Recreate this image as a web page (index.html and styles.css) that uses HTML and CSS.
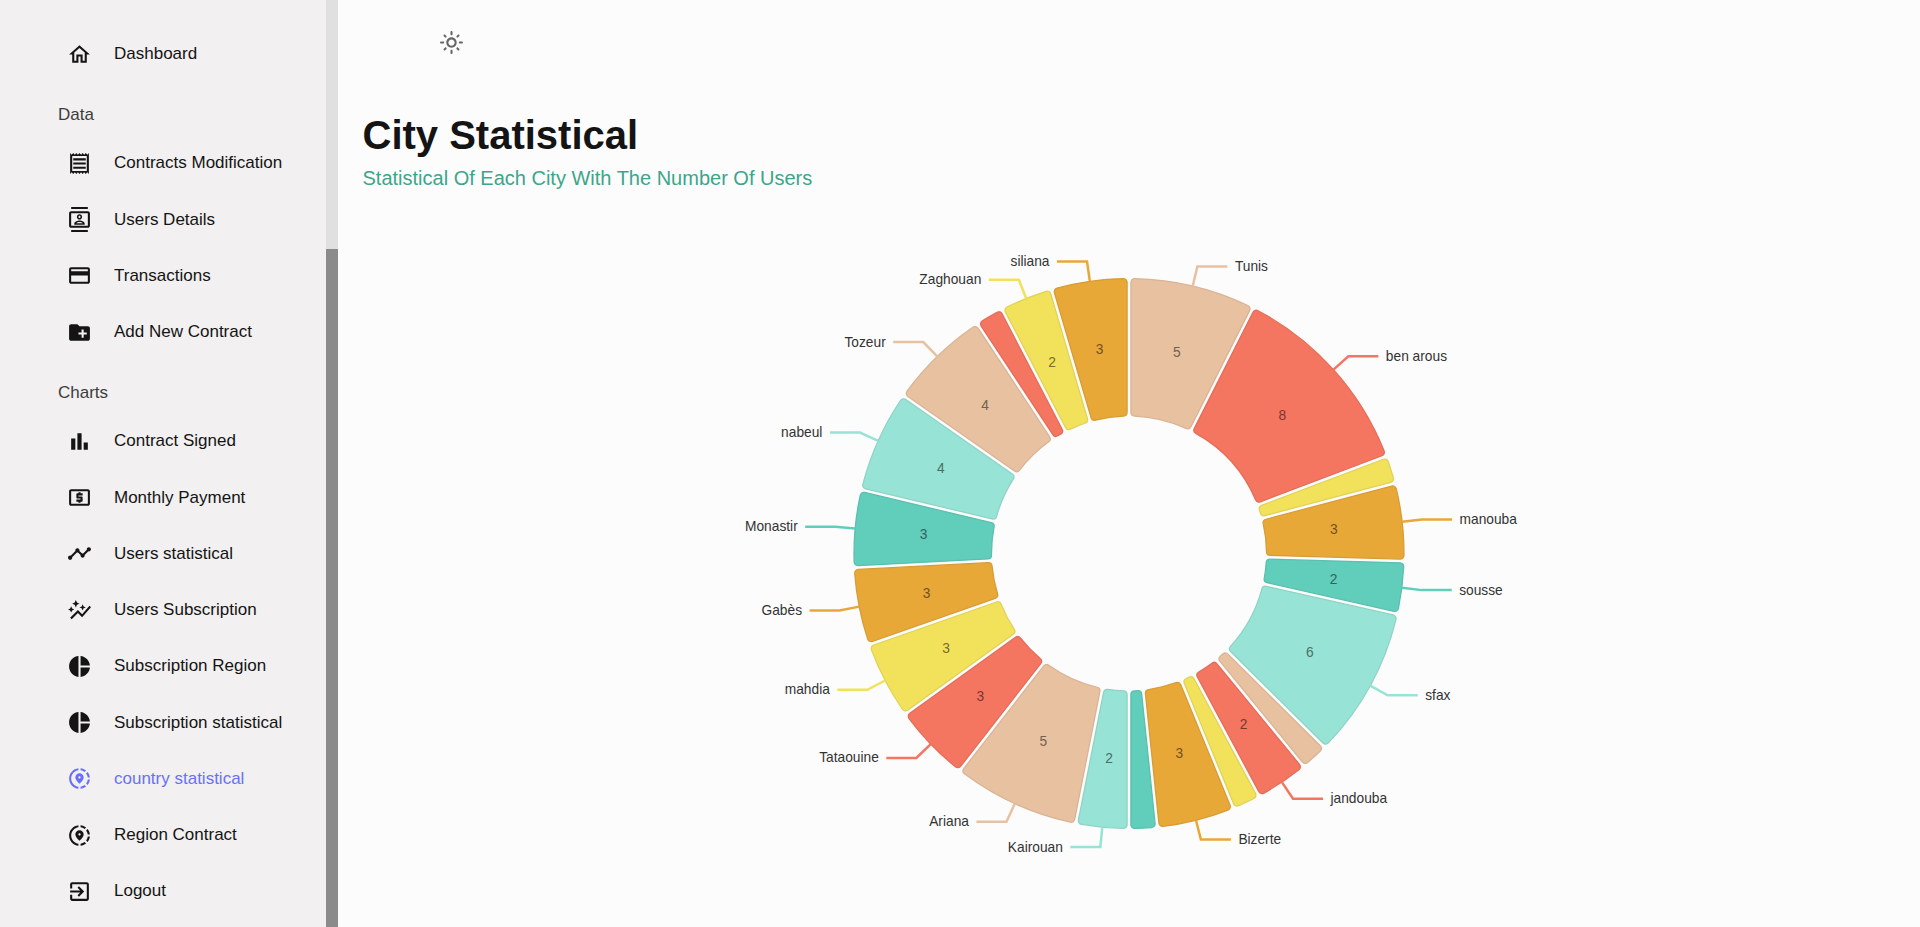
FILE: index.html
```html
<!DOCTYPE html>
<html lang="en">
<head>
  <meta charset="UTF-8" />
  <meta name="viewport" content="width=device-width, initial-scale=1" />
  <title>City Statistical</title>
  <link rel="stylesheet" href="styles.css">
</head>
<body>

<div class="app">
  <aside class="sidebar">
    <nav class="menu">
      <a class="menu-item">
        <svg class="icon" viewBox="0 0 24 24"><path d="m12 5.69 5 4.5V18h-2v-6H9v6H7v-7.81l5-4.5M12 3 2 12h3v8h6v-6h2v6h6v-8h3L12 3z"/></svg>
        <span>Dashboard</span>
      </a>

      <h6 class="menu-title">Data</h6>
      <a class="menu-item">
        <svg class="icon" viewBox="0 0 24 24"><path d="M19.5 3.5 18 2l-1.5 1.5L15 2l-1.5 1.5L12 2l-1.5 1.5L9 2 7.5 3.5 6 2 4.5 3.5 3 2v20l1.5-1.5L6 22l1.5-1.5L9 22l1.5-1.5L12 22l1.5-1.5L15 22l1.5-1.5L18 22l1.5-1.5L21 22V2l-1.5 1.5zM19 19.09H5V4.91h14v14.18zM6 15h12v2H6zm0-4h12v2H6zm0-4h12v2H6z"/></svg>
        <span>Contracts Modification</span>
      </a>
      <a class="menu-item">
        <svg class="icon" viewBox="0 0 24 24"><path d="M20 0H4v2h16V0zM4 24h16v-2H4v2zM20 4H4c-1.1 0-2 .9-2 2v12c0 1.1.9 2 2 2h16c1.1 0 2-.9 2-2V6c0-1.1-.9-2-2-2zm0 14H4V6h16v12zm-8-6c1.38 0 2.5-1.12 2.5-2.5S13.38 7 12 7 9.5 8.12 9.5 9.5 10.62 12 12 12zm0-3.5c.55 0 1 .45 1 1s-.45 1-1 1-1-.45-1-1 .45-1 1-1zM17 15.99c0-2.09-3.31-2.99-5-2.99s-5 .9-5 2.99V17h10v-1.01zM8.81 15.5c.61-.52 2.03-1 3.19-1 1.17 0 2.59.48 3.2 1H8.81z"/></svg>
        <span>Users Details</span>
      </a>
      <a class="menu-item">
        <svg class="icon" viewBox="0 0 24 24"><path d="M20 4H4c-1.11 0-1.99.89-1.99 2L2 18c0 1.11.89 2 2 2h16c1.11 0 2-.89 2-2V6c0-1.11-.89-2-2-2zm0 14H4v-6h16v6zm0-10H4V6h16v2z"/></svg>
        <span>Transactions</span>
      </a>
      <a class="menu-item">
        <svg class="icon" viewBox="0 0 24 24"><path d="M20 6h-8l-2-2H4c-1.11 0-1.99.89-1.99 2L2 18c0 1.11.89 2 2 2h16c1.11 0 2-.89 2-2V8c0-1.11-.89-2-2-2zm-1 8h-3v3h-2v-3h-3v-2h3V9h2v3h3v2z"/></svg>
        <span>Add New Contract</span>
      </a>

      <h6 class="menu-title">Charts</h6>
      <a class="menu-item">
        <svg class="icon" viewBox="0 0 24 24"><path d="M4 9h4v11H4zm12 4h4v7h-4zm-6-9h4v16h-4z"/></svg>
        <span>Contract Signed</span>
      </a>
      <a class="menu-item">
        <svg class="icon" viewBox="0 0 24 24"><path d="M11 17h2v-1h1c.55 0 1-.45 1-1v-3c0-.55-.45-1-1-1h-3v-1h4V8h-2V7h-2v1h-1c-.55 0-1 .45-1 1v3c0 .55.45 1 1 1h3v1H9v2h2v1zm9-13H4c-1.11 0-1.99.89-1.99 2L2 18c0 1.11.89 2 2 2h16c1.11 0 2-.89 2-2V6c0-1.11-.89-2-2-2zm0 14H4V6h16v12z"/></svg>
        <span>Monthly Payment</span>
      </a>
      <a class="menu-item">
        <svg class="icon" viewBox="0 0 24 24"><path d="M23 8c0 1.1-.9 2-2 2-.18 0-.35-.02-.51-.07l-3.56 3.55c.05.16.07.34.07.52 0 1.1-.9 2-2 2s-2-.9-2-2c0-.18.02-.36.07-.52l-2.55-2.55c-.16.05-.34.07-.52.07s-.36-.02-.52-.07l-4.55 4.56c.05.16.07.33.07.51 0 1.1-.9 2-2 2s-2-.9-2-2 .9-2 2-2c.18 0 .35.02.51.07l4.56-4.55C8.02 9.36 8 9.18 8 9c0-1.1.9-2 2-2s2 .9 2 2c0 .18-.02.36-.07.52l2.55 2.55c.16-.05.34-.07.52-.07s.36.02.52.07l3.55-3.56C19.02 8.35 19 8.18 19 8c0-1.1.9-2 2-2s2 .9 2 2z"/></svg>
        <span>Users statistical</span>
      </a>
      <a class="menu-item">
        <svg class="icon" viewBox="0 0 24 24"><path d="M14.06 9.94 12 9l2.06-.94L15 6l.94 2.06L18 9l-2.06.94L15 12l-.94-2.06zM4 14l.94-2.06L7 11l-2.06-.94L4 8l-.94 2.06L1 11l2.06.94L4 14zm4.5-5 1.09-2.41L12 5.5 9.59 4.41 8.5 2 7.41 4.41 5 5.5l2.41 1.09L8.5 9zm-4 11.5 6-6.01 4 4L23 8.93l-1.41-1.41-7.09 7.97-4-4L3 19l1.5 1.5z"/></svg>
        <span>Users Subscription</span>
      </a>
      <a class="menu-item">
        <svg class="icon" viewBox="0 0 24 24"><path d="M11 2v20c-5.07-.5-9-4.79-9-10s3.93-9.5 9-10zm2.03 0v8.99H22c-.47-4.74-4.24-8.52-8.97-8.99zm0 11.01V22c4.74-.47 8.5-4.25 8.97-8.99h-8.97z"/></svg>
        <span>Subscription Region</span>
      </a>
      <a class="menu-item">
        <svg class="icon" viewBox="0 0 24 24"><path d="M11 2v20c-5.07-.5-9-4.79-9-10s3.93-9.5 9-10zm2.03 0v8.99H22c-.47-4.74-4.24-8.52-8.97-8.99zm0 11.01V22c4.74-.47 8.5-4.25 8.97-8.99h-8.97z"/></svg>
        <span>Subscription statistical</span>
      </a>
      <a class="menu-item active">
        <svg class="icon" viewBox="0 0 24 24"><path d="M13.02 19.93v2.02c2.01-.2 3.84-1 5.32-2.21l-1.42-1.43c-1.11.86-2.44 1.44-3.9 1.62zM4.03 12c0-4.05 3.03-7.41 6.95-7.93V2.05C5.95 2.58 2.03 6.84 2.03 12c0 5.16 3.92 9.42 8.95 9.95v-2.02c-3.92-.52-6.95-3.88-6.95-7.93zm15.92-1h2.02c-.2-2.01-1-3.84-2.21-5.32l-1.43 1.43c.86 1.1 1.44 2.43 1.62 3.89zm-1.61-6.74c-1.48-1.21-3.32-2.01-5.32-2.21v2.02c1.46.18 2.79.76 3.9 1.62l1.42-1.43zm-.01 12.64 1.43 1.42c1.21-1.48 2.01-3.31 2.21-5.32h-2.02c-.18 1.46-.76 2.79-1.62 3.9zM16 11.1C16 8.61 14.1 7 12 7s-4 1.61-4 4.1c0 1.66 1.33 3.63 4 5.9 2.67-2.27 4-4.24 4-5.9zm-4 .9c-.59 0-1.07-.48-1.07-1.07 0-.59.48-1.07 1.07-1.07s1.07.48 1.07 1.07c0 .59-.48 1.07-1.07 1.07z"/></svg>
        <span>country statistical</span>
      </a>
      <a class="menu-item">
        <svg class="icon" viewBox="0 0 24 24"><path d="M13.02 19.93v2.02c2.01-.2 3.84-1 5.32-2.21l-1.42-1.43c-1.11.86-2.44 1.44-3.9 1.62zM4.03 12c0-4.05 3.03-7.41 6.95-7.93V2.05C5.95 2.58 2.03 6.84 2.03 12c0 5.16 3.92 9.42 8.95 9.95v-2.02c-3.92-.52-6.95-3.88-6.95-7.93zm15.92-1h2.02c-.2-2.01-1-3.84-2.21-5.32l-1.43 1.43c.86 1.1 1.44 2.43 1.62 3.89zm-1.61-6.74c-1.48-1.21-3.32-2.01-5.32-2.21v2.02c1.46.18 2.79.76 3.9 1.62l1.42-1.43zm-.01 12.64 1.43 1.42c1.21-1.48 2.01-3.31 2.21-5.32h-2.02c-.18 1.46-.76 2.79-1.62 3.9zM16 11.1C16 8.61 14.1 7 12 7s-4 1.61-4 4.1c0 1.66 1.33 3.63 4 5.9 2.67-2.27 4-4.24 4-5.9zm-4 .9c-.59 0-1.07-.48-1.07-1.07 0-.59.48-1.07 1.07-1.07s1.07.48 1.07 1.07c0 .59-.48 1.07-1.07 1.07z"/></svg>
        <span>Region Contract</span>
      </a>
      <a class="menu-item">
        <svg class="icon" viewBox="0 0 24 24"><path d="M10.09 15.59 11.5 17l5-5-5-5-1.41 1.41L12.67 11H3v2h9.67l-2.58 2.59zM19 3H5c-1.11 0-2 .9-2 2v4h2V5h14v14H5v-4H3v4c0 1.1.89 2 2 2h14c1.1 0 2-.9 2-2V5c0-1.1-.9-2-2-2z"/></svg>
        <span>Logout</span>
      </a>
    </nav>
  </aside>

  <div class="scrollbar"><div class="scrollbar-thumb"></div></div>

  <main class="content">
    <div class="topbar">
      <svg class="icon theme-icon" viewBox="0 0 24 24"><path d="M12 9c1.65 0 3 1.35 3 3s-1.35 3-3 3-3-1.35-3-3 1.35-3 3-3m0-2c-2.76 0-5 2.24-5 5s2.24 5 5 5 5-2.24 5-5-2.24-5-5-5zM2 13h2c.55 0 1-.45 1-1s-.45-1-1-1H2c-.55 0-1 .45-1 1s.45 1 1 1zm18 0h2c.55 0 1-.45 1-1s-.45-1-1-1h-2c-.55 0-1 .45-1 1s.45 1 1 1zM11 2v2c0 .55.45 1 1 1s1-.45 1-1V2c0-.55-.45-1-1-1s-1 .45-1 1zm0 18v2c0 .55.45 1 1 1s1-.45 1-1v-2c0-.55-.45-1-1-1s-1 .45-1 1zM5.99 4.58c-.39-.39-1.03-.39-1.41 0-.39.39-.39 1.03 0 1.41l1.06 1.06c.39.39 1.03.39 1.41 0s.39-1.03 0-1.41L5.99 4.58zm12.37 12.37c-.39-.39-1.03-.39-1.41 0-.39.39-.39 1.03 0 1.41l1.06 1.06c.39.39 1.03.39 1.41 0 .39-.39.39-1.03 0-1.41l-1.06-1.06zm1.06-10.96c.39-.39.39-1.03 0-1.41-.39-.39-1.03-.39-1.41 0l-1.06 1.06c-.39.39-.39 1.03 0 1.41s1.03.39 1.41 0l1.06-1.06zM7.05 18.36c.39-.39.39-1.03 0-1.41-.39-.39-1.03-.39-1.41 0l-1.06 1.06c-.39.39-.39 1.03 0 1.41s1.03.39 1.41 0l1.06-1.06z"/></svg>
    </div>

    <header class="page-header">
      <h2>City Statistical</h2>
      <h5>Statistical Of Each City With The Number Of Users</h5>
    </header>

    <svg id="cityPie" class="pie" width="1582" height="700"></svg>
  </main>
</div>

<script src="chart.js"></script>
</body>
</html>
```

FILE: styles.css
```css
html, body {
  margin: 0;
  padding: 0;
  height: 100%;
  overflow: hidden;
  background: #fcfcfc;
  font-family: "Liberation Sans", Arial, sans-serif;
}

.app {
  display: flex;
  height: 100vh;
}

.sidebar {
  width: 326px;
  flex: none;
  background: #f2f0f0;
  overflow: hidden;
}

.menu {
  padding-top: 26px;
}

.menu-item {
  display: flex;
  align-items: center;
  gap: 22px;
  height: 56.25px;
  padding-left: 67px;
  font-size: 17px;
  color: #141414;
  cursor: pointer;
}

.menu-item.active {
  color: #6870fa;
}

.icon {
  width: 25px;
  height: 25px;
  flex: none;
  fill: currentColor;
}

.menu-title {
  margin: 23px 0 10px 58px;
  font-size: 17px;
  font-weight: 400;
  line-height: 20px;
  color: #3d3d3d;
}

.scrollbar {
  width: 12px;
  flex: none;
  padding-top: 249px;
  box-sizing: border-box;
  background: #e0e0e0;
}

.scrollbar-thumb {
  height: 100%;
  background: #8b8b8b;
}

.content {
  flex: 1;
  min-width: 0;
}

.topbar {
  height: 75px;
  padding: 30px 0 0 100.5px;
  box-sizing: border-box;
}

.theme-icon {
  color: #666;
  display: block;
}

.page-header {
  padding: 37px 0 13px 24.5px;
}

.page-header h2 {
  margin: 0 0 8px;
  font-size: 40px;
  line-height: 46px;
  font-weight: 700;
  color: #141414;
}

.page-header h5 {
  margin: 0;
  font-size: 20px;
  line-height: 24px;
  font-weight: 400;
  color: #3da58a;
}

.pie {
  display: block;
}

.pie text {
  font-family: "Liberation Sans", Arial, sans-serif;
  font-size: 13.75px;
}

.pie .link-label {
  fill: #333;
}
```

FILE: chart.js
```js
const cities = [
  { id: "Tunis", value: 5 },
  { id: "ben arous", value: 8 },
  { id: "kef", value: 1 },
  { id: "manouba", value: 3 },
  { id: "sousse", value: 2 },
  { id: "sfax", value: 6 },
  { id: "kasserine", value: 1 },
  { id: "jandouba", value: 2 },
  { id: "beja", value: 1 },
  { id: "Bizerte", value: 3 },
  { id: "kebili", value: 1 },
  { id: "Kairouan", value: 2 },
  { id: "Ariana", value: 5 },
  { id: "Tataouine", value: 3 },
  { id: "mahdia", value: 3 },
  { id: "Gabès", value: 3 },
  { id: "Monastir", value: 3 },
  { id: "nabeul", value: 4 },
  { id: "Tozeur", value: 4 },
  { id: "gafsa", value: 1 },
  { id: "Zaghouan", value: 2 },
  { id: "siliana", value: 3 },
];

const colors = ["#e8c1a0", "#f47560", "#f1e15b", "#e8a838", "#61cdbb", "#97e3d5"];

const svg = document.getElementById("cityPie");
const cx = 791;
const cy = 350.5;
const outer = 275;
const inner = 137.5;
const corner = 3.75;
const padAngle = 0.7 * Math.PI / 180;
const skipAngle = 10 * Math.PI / 180;
const diagonal = 20;
const straight = 30;
const textOffset = 7.5;

function darker(hex, k) {
  const f = Math.pow(0.7, k);
  const n = parseInt(hex.slice(1), 16);
  const r = Math.round((n >> 16) * f);
  const g = Math.round(((n >> 8) & 255) * f);
  const b = Math.round((n & 255) * f);
  return `rgb(${r},${g},${b})`;
}

// angle is clockwise from 12 o'clock, side moves the point off the radial line
function point(angle, radius, side = 0) {
  const x = radius * Math.sin(angle) + side * Math.cos(angle);
  const y = -radius * Math.cos(angle) + side * Math.sin(angle);
  return `${(cx + x).toFixed(2)} ${(cy + y).toFixed(2)}`;
}

function slicePath(a0, a1) {
  const halfGap = Math.sqrt(inner * inner + outer * outer) * Math.sin(padAngle / 2);
  const off = halfGap + corner;
  const outerTrim = Math.asin(off / (outer - corner));
  const innerTrim = Math.asin(off / (inner + corner));
  const outerFoot = Math.sqrt((outer - corner) ** 2 - off * off);
  const innerFoot = Math.sqrt((inner + corner) ** 2 - off * off);
  const c = `A${corner} ${corner} 0 0 1`;

  return [
    `M${point(a0 + outerTrim, outer)}`,
    `A${outer} ${outer} 0 0 1 ${point(a1 - outerTrim, outer)}`,
    `${c} ${point(a1, outerFoot, -halfGap)}`,
    `L${point(a1, innerFoot, -halfGap)}`,
    `${c} ${point(a1 - innerTrim, inner)}`,
    `A${inner} ${inner} 0 0 0 ${point(a0 + innerTrim, inner)}`,
    `${c} ${point(a0, innerFoot, halfGap)}`,
    `L${point(a0, outerFoot, halfGap)}`,
    `${c} ${point(a0 + outerTrim, outer)}Z`,
  ].join(" ");
}

function add(tag, attrs, text) {
  const el = document.createElementNS("http://www.w3.org/2000/svg", tag);
  for (const key in attrs) el.setAttribute(key, attrs[key]);
  if (text !== undefined) el.textContent = text;
  svg.appendChild(el);
  return el;
}

const total = cities.reduce((sum, c) => sum + c.value, 0);
const perUnit = (2 * Math.PI - cities.length * padAngle) / total;

let angle = 0;
const slices = cities.map((city, i) => {
  const start = angle;
  angle += city.value * perUnit + padAngle;
  return { ...city, start, end: angle, mid: (start + angle) / 2, color: colors[i % colors.length] };
});

slices.forEach((s) => {
  add("path", {
    d: slicePath(s.start, s.end),
    fill: s.color,
    stroke: darker(s.color, 0.2),
    "stroke-width": 1.25,
  });
});

slices.forEach((s) => {
  if (s.end - s.start < skipAngle) return;

  const right = Math.sin(s.mid) > 0 ? 1 : -1;
  const kneeX = cx + (outer + diagonal) * Math.sin(s.mid);
  const kneeY = cy - (outer + diagonal) * Math.cos(s.mid);
  const endX = kneeX + right * straight;

  add("path", {
    d: `M${point(s.mid, outer)} L${kneeX.toFixed(2)} ${kneeY.toFixed(2)} L${endX.toFixed(2)} ${kneeY.toFixed(2)}`,
    fill: "none",
    stroke: s.color,
    "stroke-width": 2.5,
  });

  add("text", {
    class: "link-label",
    x: endX + right * textOffset,
    y: kneeY,
    "text-anchor": right > 0 ? "start" : "end",
    "dominant-baseline": "central",
  }, s.id);

  const r = (inner + outer) / 2;
  add("text", {
    x: cx + r * Math.sin(s.mid),
    y: cy - r * Math.cos(s.mid),
    fill: darker(s.color, 2),
    "text-anchor": "middle",
    "dominant-baseline": "central",
  }, s.value);
});
```
